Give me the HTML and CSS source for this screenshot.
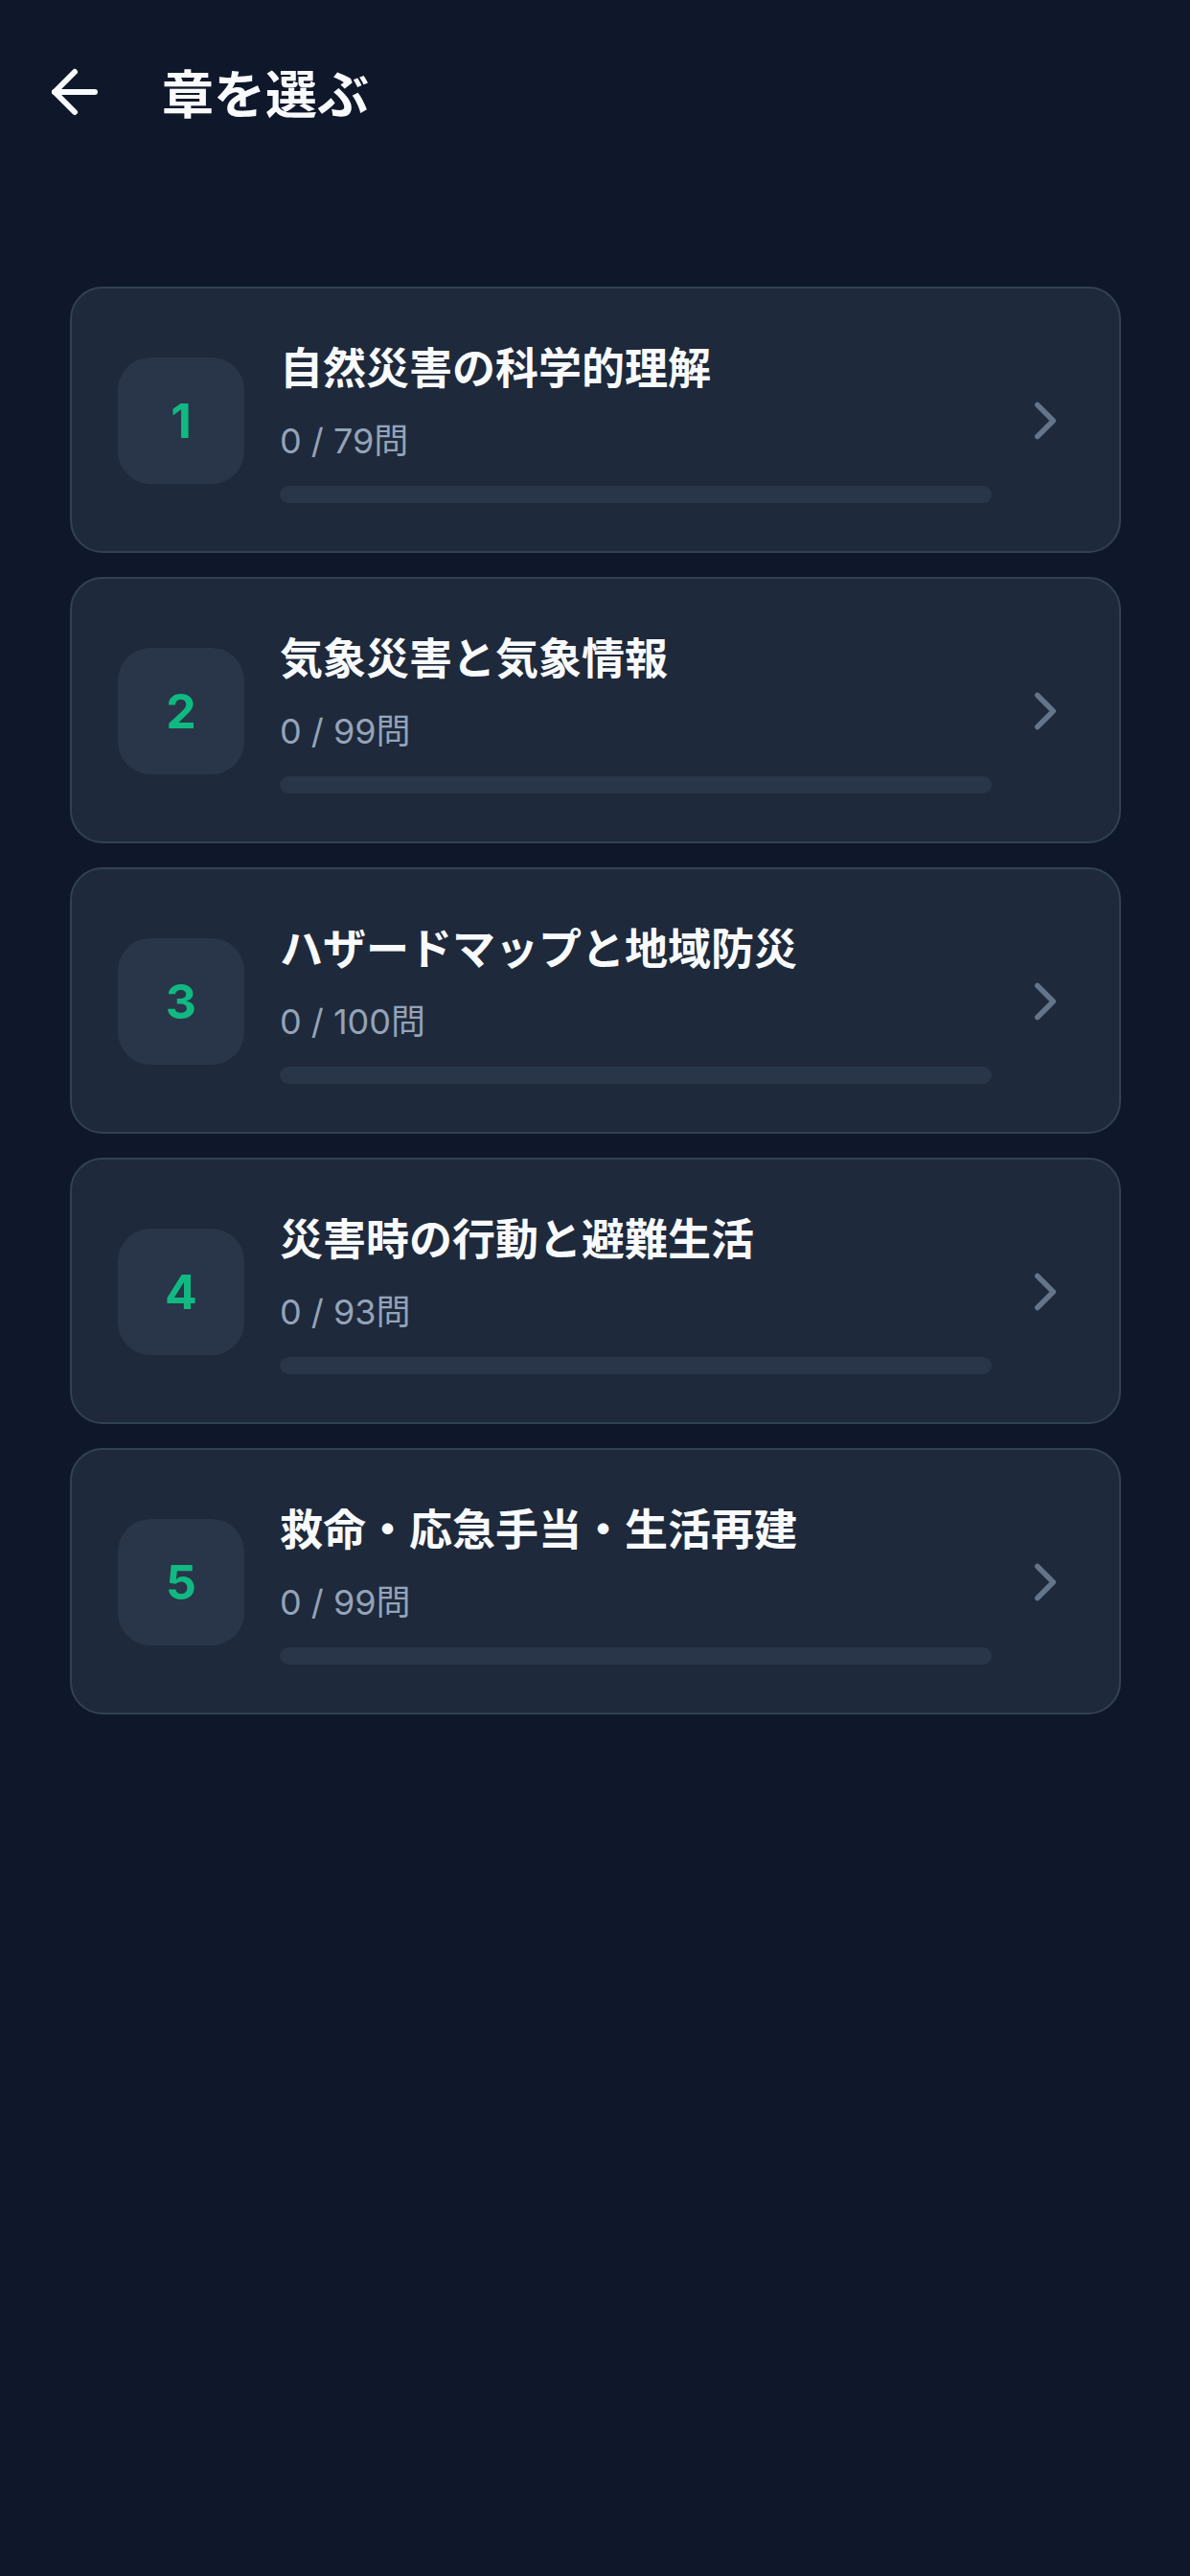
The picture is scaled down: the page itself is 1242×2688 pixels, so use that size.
FILE: index.html
```html
<!DOCTYPE html>
<html lang="ja">
<head>
    <meta charset="UTF-8">
    <meta name="viewport" content="width=device-width, initial-scale=1.0">
    <title>章を選ぶ</title>
    <link rel="stylesheet" href="styles.css">
</head>
<body>
    <!-- Header -->
    <header class="top-bar">
        <button class="back-btn" aria-label="戻る">
            <svg width="72" height="72" viewBox="0 0 24 24" fill="none" stroke="currentColor" stroke-width="2" stroke-linecap="round" stroke-linejoin="round">
                <path d="M19 12H5" />
                <path d="M12 19l-7-7 7-7" />
            </svg>
        </button>
        <h1>章を選ぶ</h1>
    </header>

    <!-- Chapter list -->
    <main class="chapter-list">
        <a class="chapter-card" href="#">
            <div class="chapter-num">1</div>
            <div class="chapter-info">
                <div class="chapter-title">自然災害の科学的理解</div>
                <div class="chapter-count">0 / 79問</div>
                <div class="progress"><div class="progress-fill" style="width: 0%;"></div></div>
            </div>
            <svg class="chevron" width="66" height="66" viewBox="0 0 24 24" fill="none" stroke="currentColor" stroke-width="2" stroke-linecap="round" stroke-linejoin="round"><path d="M9 6l6 6-6 6" /></svg>
        </a>

        <a class="chapter-card" href="#">
            <div class="chapter-num">2</div>
            <div class="chapter-info">
                <div class="chapter-title">気象災害と気象情報</div>
                <div class="chapter-count">0 / 99問</div>
                <div class="progress"><div class="progress-fill" style="width: 0%;"></div></div>
            </div>
            <svg class="chevron" width="66" height="66" viewBox="0 0 24 24" fill="none" stroke="currentColor" stroke-width="2" stroke-linecap="round" stroke-linejoin="round"><path d="M9 6l6 6-6 6" /></svg>
        </a>

        <a class="chapter-card" href="#">
            <div class="chapter-num">3</div>
            <div class="chapter-info">
                <div class="chapter-title">ハザードマップと地域防災</div>
                <div class="chapter-count">0 / 100問</div>
                <div class="progress"><div class="progress-fill" style="width: 0%;"></div></div>
            </div>
            <svg class="chevron" width="66" height="66" viewBox="0 0 24 24" fill="none" stroke="currentColor" stroke-width="2" stroke-linecap="round" stroke-linejoin="round"><path d="M9 6l6 6-6 6" /></svg>
        </a>

        <a class="chapter-card" href="#">
            <div class="chapter-num">4</div>
            <div class="chapter-info">
                <div class="chapter-title">災害時の行動と避難生活</div>
                <div class="chapter-count">0 / 93問</div>
                <div class="progress"><div class="progress-fill" style="width: 0%;"></div></div>
            </div>
            <svg class="chevron" width="66" height="66" viewBox="0 0 24 24" fill="none" stroke="currentColor" stroke-width="2" stroke-linecap="round" stroke-linejoin="round"><path d="M9 6l6 6-6 6" /></svg>
        </a>

        <a class="chapter-card" href="#">
            <div class="chapter-num">5</div>
            <div class="chapter-info">
                <div class="chapter-title">救命・応急手当・生活再建</div>
                <div class="chapter-count">0 / 99問</div>
                <div class="progress"><div class="progress-fill" style="width: 0%;"></div></div>
            </div>
            <svg class="chevron" width="66" height="66" viewBox="0 0 24 24" fill="none" stroke="currentColor" stroke-width="2" stroke-linecap="round" stroke-linejoin="round"><path d="M9 6l6 6-6 6" /></svg>
        </a>
    </main>
</body>
</html>
```

FILE: styles.css
```css
body {
    margin: 0;
    min-height: 2688px;
    background-color: #0f172a;
    color: #f8fafc;
    font-family: "Inter", "Noto Sans CJK JP", sans-serif;
}
.top-bar {
    display: flex;
    align-items: center;
    height: 120px;
    padding: 36px 0 0 42px;
}
.back-btn {
    display: flex;
    padding: 0;
    background: none;
    border: none;
    color: #f8fafc;
    cursor: pointer;
}
.top-bar h1 {
    margin: 0 0 0 55px;
    font-family: "Noto Sans CJK JP", sans-serif;
    font-size: 54px;
    font-weight: 700;
    line-height: 1;
}
.chapter-list {
    display: flex;
    flex-direction: column;
    gap: 25px;
    margin: 143px 72px 0 73px;
}
.chapter-card {
    display: flex;
    align-items: center;
    padding: 51px 44px 50px 48px;
    background-color: #1e293b;
    border: 2px solid #334155;
    border-radius: 34px;
    color: inherit;
    text-decoration: none;
}
.chapter-num {
    flex: 0 0 132px;
    height: 132px;
    display: flex;
    align-items: center;
    justify-content: center;
    background-color: #293548;
    border-radius: 34px;
    color: #10b981;
    font-size: 50px;
    font-weight: 700;
}
.chapter-info {
    flex: 1;
    margin-left: 37px;
}
.chapter-title {
    font-family: "Noto Sans CJK JP", sans-serif;
    font-size: 45px;
    font-weight: 700;
    line-height: 60px;
    color: #f8fafc;
}
.chapter-count {
    margin-top: 22px;
    font-size: 36px;
    line-height: 52px;
    color: #94a3b8;
}
.progress {
    margin-top: 21px;
    height: 18px;
    background-color: #293548;
    border-radius: 9px;
    overflow: hidden;
}
.progress-fill {
    height: 100%;
    background-color: #10b981;
}
.chevron {
    flex: 0 0 66px;
    margin-left: 23px;
    color: #64748b;
}
```
